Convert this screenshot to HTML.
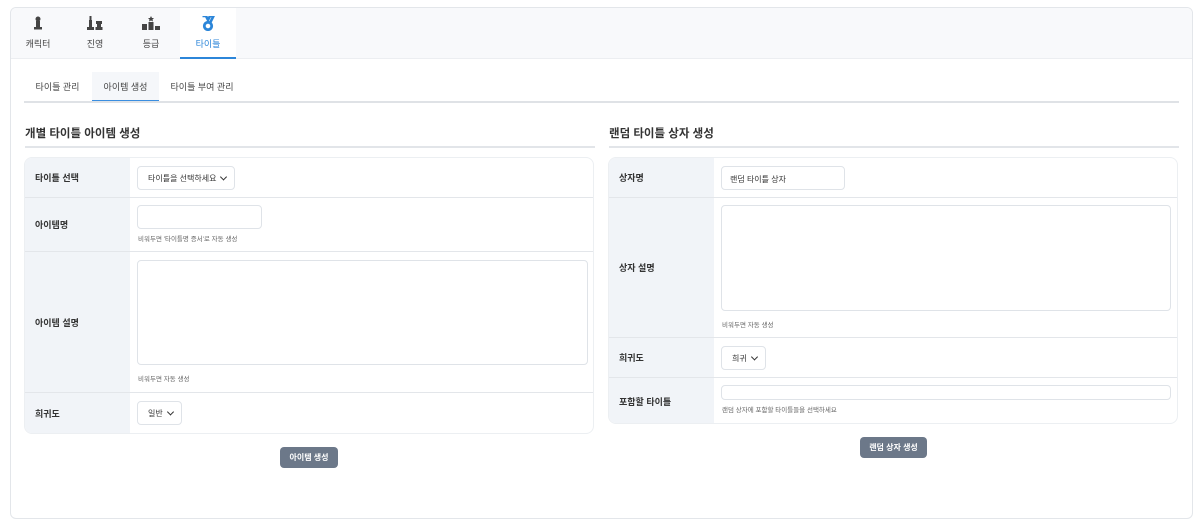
<!DOCTYPE html><html><head><meta charset="utf-8"><style>
*{box-sizing:border-box;margin:0;padding:0}
body{width:1200px;height:525px;background:#fff;font-family:"Liberation Sans","Noto Sans CJK KR",sans-serif;color:#333;position:relative;overflow:hidden}
.a{position:absolute}
.wrap{left:10px;top:7px;width:1183px;height:512px;border:1px solid #e3e6ea;border-radius:6px;background:#fff;overflow:hidden}
.in{position:absolute;left:-1px;top:-1px;width:1183px;height:512px}
.nav{left:0;top:0;width:100%;height:52px;background:#f8f9fb;border-bottom:1px solid #eceef1}
.tab{top:0;height:51px;width:56px;text-align:center;font-size:9px;color:#444}
.tab span{position:absolute;left:0;right:0;top:30px}
.tab svg{position:absolute;left:50%;transform:translateX(-50%);top:9px}
.sub{top:73px;height:22px;font-size:9px;color:#444;text-align:center;line-height:14px}
.h{font-size:11.5px;font-weight:bold;color:#333}
.tbl{border-radius:8px;overflow:hidden;border:1px solid #eceff2}
.row{position:absolute;left:0;width:100%;border-bottom:1px solid #e3e6ea}
.lab{position:absolute;left:0;top:0;bottom:0;width:105px;background:#f1f4f8;font-size:9px;font-weight:bold;color:#333;padding-left:10px;display:flex;align-items:center}
.inp{position:absolute;border:1px solid #dfe3e8;border-radius:4px;background:#fff}
.sel{position:absolute;border:1px solid #dfe3e8;border-radius:4px;background:#fff;font-size:8px;color:#333;padding-left:10px;display:flex;align-items:center}
.sel:after{content:"";position:absolute;right:8px;top:50%;width:4px;height:4px;border-right:1.3px solid #333;border-bottom:1.3px solid #333;transform:translateY(-70%) rotate(45deg)}
.hint{position:absolute;font-size:6.5px;color:#666}
.btn{position:absolute;background:#6c7889;color:#fff;border-radius:4px;font-size:8px;font-weight:bold;display:flex;align-items:center;justify-content:center}
</style></head><body>
<div class="a wrap"><div class="in">
<div class="a nav"></div>
<div class="a tab" style="left:0"><svg width="10" height="14" viewBox="0 0 10 14"><circle cx="5" cy="3" r="2.5" fill="#444"/><rect x="3" y="5" width="4" height="6" fill="#444"/><rect x="1" y="11" width="8" height="2.5" fill="#444"/></svg><span>캐릭터</span></div>
<div class="a tab" style="left:57px"><svg width="16" height="14" viewBox="0 0 16 14"><rect x="2.5" y="0" width="2" height="4" fill="#444"/><rect x="2" y="4" width="3" height="7" fill="#444"/><rect x="0" y="11" width="7" height="3" fill="#444"/><rect x="9" y="5" width="6" height="3" fill="#444"/><rect x="10" y="8" width="4" height="3" fill="#444"/><rect x="8.5" y="11" width="7" height="3" fill="#444"/></svg><span>진영</span></div>
<div class="a tab" style="left:113px"><svg width="18" height="14" viewBox="0 0 18 14"><path d="M9 0l1 2h2l-1.5 1.5.5 2-2-1-2 1 .5-2L6 2h2z" fill="#444"/><rect x="0" y="8" width="5" height="6" fill="#444"/><rect x="6.5" y="6" width="5" height="8" fill="#444"/><rect x="13" y="10" width="5" height="4" fill="#444"/></svg><span>등급</span></div>
<div class="a" style="left:170px;top:0;width:56px;height:52px;background:#fff;border-bottom:2px solid #2c86d9"></div>
<div class="a tab" style="left:170px;color:#2c86d9"><svg width="14" height="15" viewBox="0 0 14 15"><path d="M1.5 0h3.5l2 4 2-4h3.5l-3 6" fill="none" stroke="#2c86d9" stroke-width="2.6"/><circle cx="7" cy="10" r="3.7" fill="none" stroke="#2c86d9" stroke-width="2.8"/></svg><span>타이틀</span></div>

<div class="a sub" style="left:14px;width:67px">타이틀 관리</div>
<div class="a" style="left:82px;top:65px;width:67px;height:30px;background:#f5f7fa;border-bottom:2px solid #3a8ee0"></div>
<div class="a sub" style="left:82px;width:67px">아이템 생성</div>
<div class="a sub" style="left:150px;width:84px">타이틀 부여 관리</div>
<div class="a" style="left:14px;top:94px;width:1155px;height:2px;background:#dfe2e6"></div>

<div class="a h" style="left:15px;top:118px">개별 타이틀 아이템 생성</div>
<div class="a" style="left:15px;top:139px;width:570px;height:2px;background:#e2e5e9"></div>
<div class="a tbl" style="left:14px;top:150px;width:570px;height:277px">
 <div class="row" style="top:0;height:40px"><div class="lab">타이틀 선택</div><div class="sel" style="left:112px;top:8px;width:98px;height:24px">타이틀을 선택하세요</div></div>
 <div class="row" style="top:40px;height:54px"><div class="lab">아이템명</div><div class="inp" style="left:112px;top:7px;width:125px;height:24px"></div><div class="hint" style="left:113px;top:35px">비워두면 '타이틀명 증서'로 자동 생성</div></div>
 <div class="row" style="top:94px;height:141px"><div class="lab">아이템 설명</div><div class="inp" style="left:112px;top:8px;width:451px;height:105px"></div><div class="hint" style="left:113px;top:121px">비워두면 자동 생성</div></div>
 <div class="row" style="top:235px;height:41px;border-bottom:none"><div class="lab">희귀도</div><div class="sel" style="left:112px;top:8px;width:45px;height:24px">일반</div></div>
</div>
<div class="btn" style="left:270px;top:440px;width:58px;height:21px">아이템 생성</div>

<div class="a h" style="left:599px;top:118px">랜덤 타이틀 상자 생성</div>
<div class="a" style="left:599px;top:139px;width:570px;height:2px;background:#e2e5e9"></div>
<div class="a tbl" style="left:598px;top:150px;width:570px;height:267px">
 <div class="row" style="top:0;height:40px"><div class="lab">상자명</div><div class="inp" style="left:112px;top:8px;width:124px;height:24px;font-size:8px;padding:7px 0 0 8px">랜덤 타이틀 상자</div></div>
 <div class="row" style="top:40px;height:140px"><div class="lab">상자 설명</div><div class="inp" style="left:112px;top:7px;width:450px;height:106px"></div><div class="hint" style="left:113px;top:121px">비워두면 자동 생성</div></div>
 <div class="row" style="top:180px;height:40px"><div class="lab">희귀도</div><div class="sel" style="left:112px;top:8px;width:45px;height:24px">희귀</div></div>
 <div class="row" style="top:220px;height:46px;border-bottom:none"><div class="lab">포함할 타이틀</div><div class="inp" style="left:112px;top:7px;width:450px;height:15px"></div><div class="hint" style="left:113px;top:26px">랜덤 상자에 포함할 타이틀들을 선택하세요</div></div>
</div>
<div class="btn" style="left:850px;top:430px;width:67px;height:21px">랜덤 상자 생성</div>
</div></div>
</body></html>
